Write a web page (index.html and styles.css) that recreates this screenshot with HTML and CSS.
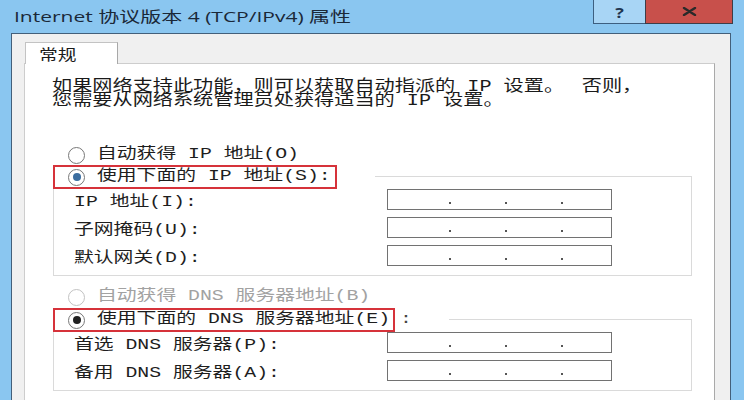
FILE: index.html
```html
<!DOCTYPE html>
<html lang="zh-CN">
<head>
<meta charset="utf-8">
<title>Internet 协议版本 4 (TCP/IPv4) 属性</title>
<link rel="stylesheet" href="styles.css">
</head>
<body>
<div class="window">
  <div class="titlebar">
    <div class="title"><span class="title-text">Internet 协议版本 4 (TCP/IPv4) 属性</span></div>
    <div class="controls">
      <div class="btn help"><span class="help-glyph">?</span></div>
      <div class="btn close">
        <svg class="close-x" width="15" height="9" viewBox="0 0 15 9"><path d="M2 1 L13 8 M13 1 L2 8" stroke="#2a2a2a" stroke-width="2.4" stroke-linecap="round" fill="none"/></svg>
      </div>
    </div>
  </div>
  <div class="client">
    <div class="tabs"><div class="tab"><span class="tab-text">常规</span></div></div>
    <div class="panel">
      <div class="desc">
        <span class="desc-line">如果网络支持此功能，则可以获取自动指派的 IP 设置。<span class="desc-gap">否则，</span></span>
        <span class="desc-line">您需要从网络系统管理员处获得适当的 IP 设置。</span>
      </div>

      <div class="radio-row first">
        <span class="radio"></span><span class="lbl">自动获得 IP 地址(O)</span>
      </div>

      <div class="group group-ip">
        <div class="group-head">
          <div class="mark mark-ip"><span class="radio checked blue"></span><span class="lbl">使用下面的 IP 地址(S):</span></div>
          <div class="head-tail tail-ip"></div>
        </div>
        <div class="fields">
          <div class="field"><div class="field-label"><span class="lbl">IP 地址(I):</span></div><div class="ip"><i></i><i></i><i></i></div></div>
          <div class="field"><div class="field-label"><span class="lbl">子网掩码(U):</span></div><div class="ip"><i></i><i></i><i></i></div></div>
          <div class="field"><div class="field-label"><span class="lbl">默认网关(D):</span></div><div class="ip"><i></i><i></i><i></i></div></div>
        </div>
      </div>

      <div class="radio-row second disabled">
        <span class="radio"></span><span class="lbl">自动获得 DNS 服务器地址(B)</span>
      </div>

      <div class="group group-dns">
        <div class="group-head">
          <div class="mark mark-dns"><span class="radio checked"></span><span class="lbl">使用下面的 DNS 服务器地址(E)</span></div>
          <div class="head-tail tail-dns"><span class="lbl colon">:</span></div>
        </div>
        <div class="fields">
          <div class="field"><div class="field-label"><span class="lbl">首选 DNS 服务器(P):</span></div><div class="ip"><i></i><i></i><i></i></div></div>
          <div class="field"><div class="field-label"><span class="lbl">备用 DNS 服务器(A):</span></div><div class="ip"><i></i><i></i><i></i></div></div>
        </div>
      </div>
    </div>
  </div>
</div>
</body>
</html>
```

FILE: styles.css
```css
* {
  box-sizing: border-box;
  margin: 0;
  padding: 0;
}

body {
  margin: 0;
  background: #8ac6f0;
  font-family: "Noto Sans CJK SC", sans-serif;
}

.window {
  width: 744px;
  height: 400px;
  overflow: hidden;
  background: #8ac6f0;
  display: flex;
  flex-direction: column;
}

/* ---------- title bar ---------- */
.titlebar {
  height: 33px;
  flex: none;
  display: flex;
}

.title {
  padding: 6px 0 0 14px;
  font-family: "Open Sans", "Noto Sans CJK SC", sans-serif;
  font-size: 15px;
  line-height: 20px;
  color: #1a2838;
}

.title-text {
  display: inline-block;
  white-space: nowrap;
  transform: scaleX(1.4);
  transform-origin: left center;
}

.controls {
  margin-left: auto;
  margin-right: 11px;
  display: flex;
  height: 24px;
}

.btn {
  display: flex;
  align-items: center;
  justify-content: center;
}

.help {
  width: 52px;
  background: #a8d5f5;
  border: 1px solid #3d5f80;
  border-top: 0;
  border-right: 0;
}

.help-glyph {
  display: inline-block;
  font-family: "Open Sans", sans-serif;
  font-weight: 700;
  font-size: 15px;
  line-height: 20px;
  color: #1f3550;
  transform: scaleX(1.2);
}

.close {
  width: 88px;
  background: #c8504b;
  border: 1px solid #3d3d48;
  border-top: 0;
}

/* ---------- client area ---------- */
.client {
  flex: 1;
  margin: 0 13px 0 11px;
  background: #f0f0f0;
  border: 1px solid #435f7a;
  border-bottom: 0;
  padding: 8px 15px 0 12px;
  display: flex;
  flex-direction: column;
}

.tabs {
  display: flex;
  padding-left: 1px;
  position: relative;
  z-index: 1;
  margin-bottom: -1px;
}

.tab {
  width: 93px;
  height: 22px;
  background: #fff;
  border: 1px solid #c3c3c3;
  border-right-color: #a8a8a8;
  border-bottom: 0;
  padding-left: 13px;
  font-size: 15px;
  line-height: 22px;
  color: #1a1a1a;
}

.tab-text {
  display: inline-block;
  transform: scaleX(1.25);
  transform-origin: left center;
}

.panel {
  flex: 1;
  background: #fff;
  border: 1px solid #cdcdcd;
  border-right-color: #a9a9a9;
  border-bottom: 0;
  padding: 16px 0 0 27px;
}

/* ---------- text ---------- */
.desc {
  font-family: "Liberation Mono", "Noto Sans CJK SC", monospace;
  font-size: 16px;
  line-height: 14px;
  color: #1a1a1a;
}

.desc-line {
  display: block;
  white-space: nowrap;
  transform: scaleX(1.26);
  transform-origin: left center;
}

.desc-gap {
  margin-left: 14px;
}

.lbl {
  display: inline-block;
  white-space: nowrap;
  font-family: "Liberation Mono", "Noto Sans CJK SC", monospace;
  font-size: 15px;
  line-height: 20px;
  color: #1e1e1e;
  transform: scaleX(1.32);
  transform-origin: left center;
}

/* ---------- radios ---------- */
.radio-row {
  height: 22px;
  display: flex;
  align-items: center;
  padding-left: 16px;
}

.radio-row.first {
  margin-top: 36px;
}

.radio-row.second {
  margin-top: 10px;
}

.radio {
  width: 17px;
  height: 17px;
  flex: none;
  border: 1px solid #777;
  border-radius: 50%;
  background: #fff;
  margin-right: 12px;
  display: grid;
  place-items: center;
}

.radio.checked::after {
  content: "";
  width: 8px;
  height: 8px;
  border-radius: 50%;
  background: #222;
}

.radio.checked.blue::after {
  background: #3b6d9f;
}

.radio-row.disabled .radio {
  border-color: #c2c2c2;
}

.radio-row.disabled .lbl {
  color: #a2a2a2;
}

/* ---------- group boxes ---------- */
.group {
  margin: 10px 0 0 1px;
  width: 639px;
  border: 1px solid #dadada;
  padding: 0 0 9px 20px;
}

.group-dns {
  margin-top: 11px;
}

.group-head {
  display: flex;
  margin: -12px 0 0 -21px;
}

.mark {
  display: flex;
  align-items: center;
  height: 24px;
  border: 2px solid #d6323a;
  background: #fff;
  padding-left: 13px;
}

.mark-ip {
  width: 284px;
}

.mark-dns {
  width: 342px;
}

.head-tail {
  background: #fff;
  height: 24px;
  display: flex;
  align-items: center;
}

.tail-ip {
  width: 38px;
}

.tail-dns {
  width: 54px;
  padding-left: 5px;
}

.colon {
  color: #444;
}

.fields {
  display: flex;
  flex-direction: column;
  gap: 7px;
}

.field {
  display: flex;
  align-items: center;
  height: 21px;
}

.field-label {
  width: 313px;
  flex: none;
}

.ip {
  width: 225px;
  height: 21px;
  border: 1px solid #727272;
  background: #fff;
  display: flex;
  align-items: flex-end;
  gap: 54px;
  padding: 0 0 5px 61px;
}

.ip i {
  width: 2px;
  height: 2px;
  background: #555;
}
```
